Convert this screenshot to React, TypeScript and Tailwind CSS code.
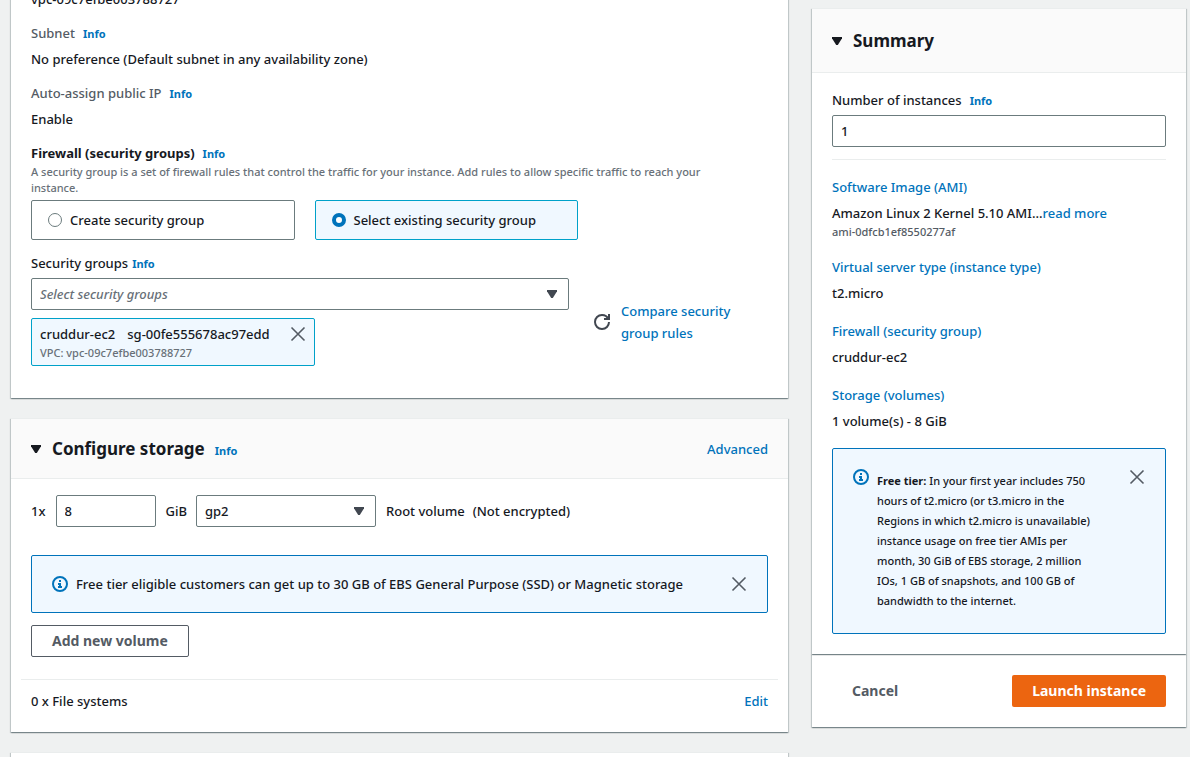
import { useState } from "react";
import type { ReactNode } from "react";

const LINK = "text-[#0073bb] hover:underline";
const FIELD = "h-8 w-full rounded-xs border border-[#6b7b7d] bg-white px-2 text-[13px] text-[#16191f]";
const CARD =
  "border-t border-[#eaeded] bg-white shadow-[0_1px_1px_0_rgba(0,28,36,0.3),1px_1px_1px_0_rgba(0,28,36,0.15),-1px_1px_1px_0_rgba(0,28,36,0.15)]";

function Info({ className = "ml-2" }: { className?: string }) {
  return (
    <a href="#info" className={`text-[11px] leading-none font-bold text-[#0073bb] hover:underline ${className}`}>
      Info
    </a>
  );
}

function CloseIcon() {
  return (
    <svg viewBox="0 0 16 16" className="block size-4 fill-none stroke-[#545b64] stroke-[1.6]" aria-hidden="true">
      <path d="M1.5 1.5l13 13M14.5 1.5l-13 13" />
    </svg>
  );
}

function InfoIcon() {
  return (
    <svg viewBox="0 0 16 16" className="block size-4 shrink-0 fill-none stroke-[#0073bb] stroke-2" aria-hidden="true">
      <circle cx="8" cy="8" r="7" />
      <path d="M8 11V8H6M10 11H6M8 6V4" />
    </svg>
  );
}

function RefreshIcon() {
  return (
    <svg viewBox="0 0 16 16" className="block size-4 fill-none stroke-[#414750] stroke-2" aria-hidden="true">
      <path d="M10 5h5V0" />
      <path d="M15 8a6.957 6.957 0 01-7 7 6.957 6.957 0 01-7-7 6.957 6.957 0 017-7 6.87 6.87 0 016.3 4" />
    </svg>
  );
}

function Caret({ className = "fill-[#414750]" }: { className?: string }) {
  return (
    <svg viewBox="0 0 10 8" className={`block h-2 w-[10px] ${className}`} aria-hidden="true">
      <path d="M0 0h10v1.2L5.8 8H4.2L0 1.2z" />
    </svg>
  );
}

function SelectBox({ id, label, className = "", children }: { id: string; label: string; className?: string; children: ReactNode }) {
  return (
    <div className="relative">
      <select id={id} aria-label={label} className={`${FIELD} appearance-none pr-8 ${className}`}>
        {children}
      </select>
      <span className="pointer-events-none absolute inset-y-0 right-3 flex items-center">
        <Caret />
      </span>
    </div>
  );
}

function Detail({ label, value }: { label: string; value: string }) {
  return (
    <div>
      <dt className="mb-1 text-[#545b64]">
        {label}
        <Info />
      </dt>
      <dd>{value}</dd>
    </div>
  );
}

function Tile({ label, checked, onSelect }: { label: string; checked: boolean; onSelect: () => void }) {
  return (
    <label
      className={`flex h-10 items-center gap-2 rounded-xs border px-4 ${checked ? "border-[#00a1c9] bg-[#f0f8ff]" : "border-[#6b7b7d] bg-white"}`}
    >
      <input
        type="radio"
        name="sg-mode"
        checked={checked}
        onChange={onSelect}
        className="size-[14px] shrink-0 appearance-none rounded-full border border-[#6b7b7d] bg-white checked:border-4 checked:border-[#0073bb]"
      />
      {label}
    </label>
  );
}

function SummaryItem({ title, children }: { title: string; children: ReactNode }) {
  return (
    <div>
      <dt className="mb-1">
        <a href="#section" className={LINK}>
          {title}
        </a>
      </dt>
      <dd>{children}</dd>
    </div>
  );
}

function NetworkCard() {
  const [mode, setMode] = useState("existing");
  return (
    <section className={`${CARD} -mt-[13px] px-5 pb-8`}>
      <dl className="flex flex-col gap-3">
        <dd>vpc-09c7efbe003788727</dd>
        <Detail label="Subnet" value="No preference (Default subnet in any availability zone)" />
        <Detail label="Auto-assign public IP" value="Enable" />
      </dl>
      <h3 className="mt-3 font-bold">
        Firewall (security groups)
        <Info />
      </h3>
      <p className="max-w-[716px] text-[11px] leading-4 text-[#687078]">
        A security group is a set of firewall rules that control the traffic for your instance. Add rules to allow specific traffic to
        reach your instance.
      </p>
      <div className="mt-1 grid max-w-[547px] grid-cols-2 gap-5">
        <Tile label="Create security group" checked={mode === "new"} onSelect={() => setMode("new")} />
        <Tile label="Select existing security group" checked={mode === "existing"} onSelect={() => setMode("existing")} />
      </div>
      <div className="mt-3">
        <label htmlFor="sg">Security groups</label>
        <Info className="ml-1" />
      </div>
      <div className="mt-1 flex items-center">
        <div className="flex-1">
          <SelectBox id="sg" label="Security groups" className="italic text-[#687078]">
            <option>Select security groups</option>
          </SelectBox>
          <div className="mt-2 flex h-12 w-[284px] items-start justify-between rounded-xs border border-[#00a1c9] bg-[#f0f8ff] px-2 pt-1">
            <div>
              <div className="flex gap-3">
                <span>cruddur-ec2</span>
                <span>sg-00fe555678ac97edd</span>
              </div>
              <div className="text-[11px] leading-4 text-[#687078]">VPC: vpc-09c7efbe003788727</div>
            </div>
            <button type="button" aria-label="Remove cruddur-ec2" className="mt-[3px]">
              <CloseIcon />
            </button>
          </div>
        </div>
        <button type="button" aria-label="Refresh security groups" className="ml-[25px]">
          <RefreshIcon />
        </button>
        <a href="#compare" className={`${LINK} ml-[11px] mr-5 w-[127px]`}>
          Compare security group rules
        </a>
      </div>
    </section>
  );
}

function StorageCard() {
  return (
    <section className={CARD}>
      <header className="flex h-[60px] items-center border-b border-[#eaeded] bg-[#fafafa] px-5">
        <button type="button" aria-label="Collapse storage" className="mr-[11px]">
          <Caret className="fill-[#16191f]" />
        </button>
        <h2 className="text-[17px] font-bold">
          Configure storage
          <Info className="ml-[10px]" />
        </h2>
        <a href="#advanced" className={`${LINK} ml-auto`}>
          Advanced
        </a>
      </header>
      <div className="px-5 pt-4">
        <div className="flex items-center">
          <label htmlFor="size" className="mr-[10px]">
            1x
          </label>
          <div className="w-[100px]">
            <input id="size" inputMode="numeric" defaultValue="8" className={FIELD} />
          </div>
          <span className="mr-[9px] ml-[10px]">GiB</span>
          <div className="w-[180px]">
            <SelectBox id="type" label="Volume type">
              <option>gp2</option>
            </SelectBox>
          </div>
          <span className="ml-[10px]">Root volume</span>
          <span className="ml-2">(Not encrypted)</span>
        </div>
        <div className="mt-7 flex h-[58px] items-center rounded-xs border border-[#0073bb] bg-[#f0f8ff] px-5">
          <InfoIcon />
          <p className="ml-2">Free tier eligible customers can get up to 30 GB of EBS General Purpose (SSD) or Magnetic storage</p>
          <button type="button" aria-label="Dismiss" className="ml-auto">
            <CloseIcon />
          </button>
        </div>
        <button
          type="button"
          className="mt-3 h-8 rounded-xs border border-[#545b64] bg-white px-5 text-sm font-bold text-[#545b64]"
        >
          Add new volume
        </button>
      </div>
      <div className="mx-[10px] mt-[22px] flex justify-between border-t border-[#eaeded] px-[10px] pt-[10px] pb-5">
        <span>0 x File systems</span>
        <a href="#edit" className={LINK}>
          Edit
        </a>
      </div>
    </section>
  );
}

function Summary() {
  return (
    <aside className="pt-2">
      <section className={`${CARD} relative`}>
        <header className="flex h-16 items-center border-b border-[#eaeded] bg-[#fafafa] px-5">
          <button type="button" aria-label="Collapse summary" className="mr-[11px]">
            <Caret className="fill-[#16191f]" />
          </button>
          <h2 className="text-[17px] font-bold">Summary</h2>
        </header>
        <div className="px-5 pt-4 pb-5">
          <div>
            <label htmlFor="count">Number of instances</label>
            <Info />
          </div>
          <input id="count" inputMode="numeric" defaultValue="1" className={`${FIELD} mt-1`} />
          <dl className="mt-3 flex flex-col gap-4 border-t border-[#eaeded] pt-4">
            <SummaryItem title="Software Image (AMI)">
              Amazon Linux 2 Kernel 5.10 AMI...
              <a href="#ami" className={LINK}>
                read more
              </a>
              <span className="block text-[11px] leading-4 text-[#545b64]">ami-0dfcb1ef8550277af</span>
            </SummaryItem>
            <SummaryItem title="Virtual server type (instance type)">t2.micro</SummaryItem>
            <SummaryItem title="Firewall (security group)">cruddur-ec2</SummaryItem>
            <SummaryItem title="Storage (volumes)">1 volume(s) - 8 GiB</SummaryItem>
          </dl>
          <div className="mt-4 flex items-start rounded-xs border border-[#0073bb] bg-[#f0f8ff] px-5 pt-5 pb-[22px]">
            <InfoIcon />
            <p className="ml-2 w-56 pt-[2px] text-[11px] leading-5">
              <strong>Free tier:</strong> In your first year includes 750 hours of t2.micro (or t3.micro in the Regions in which t2.micro
              is unavailable) instance usage on free tier AMIs per month, 30 GiB of EBS storage, 2 million IOs, 1 GB of snapshots, and
              100 GB of bandwidth to the internet.
            </p>
            <button type="button" aria-label="Dismiss" className="ml-auto">
              <CloseIcon />
            </button>
          </div>
        </div>
      </section>
      <footer className={`${CARD} flex items-center justify-between px-5 py-5`}>
        <button type="button" className="h-8 px-5 text-sm font-bold text-[#545b64]">
          Cancel
        </button>
        <button type="button" className="h-8 rounded-xs bg-[#ec6510] px-5 text-sm font-bold text-white">
          Launch instance
        </button>
      </footer>
    </aside>
  );
}

export default function App() {
  return (
    <main className="grid h-screen grid-cols-[minmax(0,1fr)_374px] gap-6 overflow-hidden bg-[#eff1f1] pr-1 pl-[11px] font-['Noto_Sans',sans-serif] text-[13px] leading-[22px] font-medium text-[#16191f]">
      <div className="flex flex-col gap-5">
        <NetworkCard />
        <StorageCard />
        <section aria-label="Advanced details" className={`${CARD} h-16 shrink-0`} />
      </div>
      <Summary />
    </main>
  );
}
